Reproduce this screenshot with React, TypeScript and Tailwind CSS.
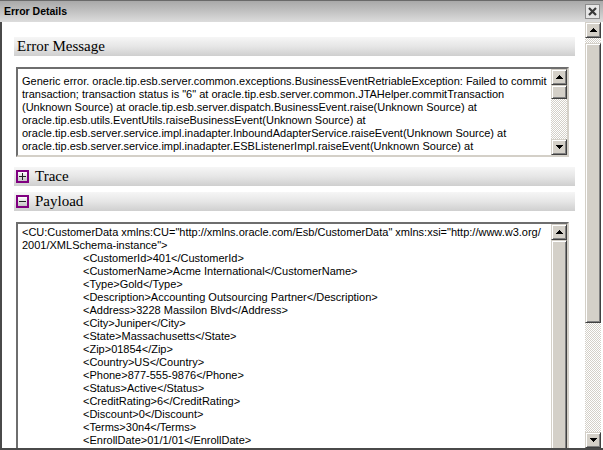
import React from "react";

const SANS = "font-['Liberation_Sans',Arial,sans-serif]";
const SERIF = "font-['Liberation_Serif','Times_New_Roman',serif]";

const errorLines = [
  "Generic error. oracle.tip.esb.server.common.exceptions.BusinessEventRetriableException: Failed to commit",
  'transaction; transaction status is "6" at oracle.tip.esb.server.common.JTAHelper.commitTransaction',
  "(Unknown Source) at oracle.tip.esb.server.dispatch.BusinessEvent.raise(Unknown Source) at",
  "oracle.tip.esb.utils.EventUtils.raiseBusinessEvent(Unknown Source) at",
  "oracle.tip.esb.server.service.impl.inadapter.InboundAdapterService.raiseEvent(Unknown Source) at",
  "oracle.tip.esb.server.service.impl.inadapter.ESBListenerImpl.raiseEvent(Unknown Source) at",
  "oracle.tip.esb.server.service.impl.inadapter.ESBListenerImpl.processMessage(Unknown Source) at",
];

const payloadFields = [
  "<CustomerId>401</CustomerId>",
  "<CustomerName>Acme International</CustomerName>",
  "<Type>Gold</Type>",
  "<Description>Accounting Outsourcing Partner</Description>",
  "<Address>3228 Massilon Blvd</Address>",
  "<City>Juniper</City>",
  "<State>Massachusetts</State>",
  "<Zip>01854</Zip>",
  "<Country>US</Country>",
  "<Phone>877-555-9876</Phone>",
  "<Status>Active</Status>",
  "<CreditRating>6</CreditRating>",
  "<Discount>0</Discount>",
  "<Terms>30n4</Terms>",
  "<EnrollDate>01/1/01</EnrollDate>",
];

function Arrow({ down }: { down?: boolean }) {
  return (
    <svg width="7" height="4" viewBox="0 0 7 4" shapeRendering="crispEdges">
      {down ? <path d="M0 0 H7 L3.5 4 Z" fill="#000" /> : <path d="M3.5 0 L7 4 H0 Z" fill="#000" />}
    </svg>
  );
}

const raised =
  "bg-[#d4d0c8] border border-[#d4d0c8] border-r-[#404040] border-b-[#404040] shadow-[inset_1px_1px_0_#ffffff,inset_-1px_-1px_0_#808080]";
const checker =
  "bg-[repeating-conic-gradient(#d4d0c8_0%_25%,#ffffff_0%_50%)] bg-size-[2px_2px]";

function ScrollButton({ down }: { down?: boolean }) {
  return (
    <div className={`w-[16px] h-[16px] shrink-0 flex items-center justify-center ${raised}`}>
      <Arrow down={down} />
    </div>
  );
}

function Scrollbar({ thumb, rest }: { thumb: string; rest: boolean }) {
  return (
    <div className={`w-[16px] shrink-0 flex flex-col ${checker}`}>
      <ScrollButton />
      <div className={`shrink-0 ${thumb} ${raised}`} />
      {rest && (
        <>
          <div className="flex-1" />
          <ScrollButton down />
        </>
      )}
    </div>
  );
}

function SectionHeader({ title, toggle }: { title: string; toggle?: "plus" | "minus" }) {
  return (
    <div className="ml-[12px] mr-[10px] h-[19px] shrink-0 flex items-center gap-[6px] bg-gradient-to-b from-[#f6f6f6] via-[#e6e6e6] to-[#cfcfcf]">
      {toggle && (
        <div className="ml-[2px] w-[13px] h-[13px] bg-[#800080] p-[2px]">
          <div className="w-full h-full bg-gradient-to-b from-[#ffffff] to-[#c4c4c4] flex items-center justify-center">
            <svg width="7" height="7" viewBox="0 0 7 7" shapeRendering="crispEdges">
              <rect x="0" y="3" width="7" height="1" fill="#222" />
              {toggle === "plus" && <rect x="3" y="0" width="1" height="7" fill="#222" />}
            </svg>
          </div>
        </div>
      )}
      <span className={`${SERIF} text-[15px] leading-none text-black ${toggle ? "" : "ml-[3px]"}`}>{title}</span>
    </div>
  );
}

function TextPanel({
  height,
  pt,
  children,
  scrollbar,
}: {
  height: string;
  pt: string;
  children: React.ReactNode;
  scrollbar: React.ReactNode;
}) {
  return (
    <div
      className={`ml-[14px] mr-[16px] ${height} shrink-0 flex border-2 border-t-[#6e6e6e] border-l-[#6e6e6e] border-r-[#d4d0c8] border-b-[#d4d0c8] bg-white`}
    >
      <div className={`flex-1 overflow-hidden pl-[4px] ${pt} ${SANS} text-[11px] leading-[13px] text-black`}>
        {children}
      </div>
      <div className="flex">{scrollbar}</div>
    </div>
  );
}

export default function App() {
  return (
    <div className={`w-[603px] h-[450px] flex flex-col overflow-hidden bg-white ${SANS}`}>
      {/* Title bar */}
      <div className="h-[22px] shrink-0 flex items-center justify-between pl-[4px] pr-[3px] border-t border-[#6a6a6a] bg-gradient-to-b from-[#a9a9a9] to-[#dcdcdc]">
        <span className="text-[10.5px] font-bold text-black">Error Details</span>
        <div className="w-[15px] h-[15px] flex items-center justify-center bg-[#e6e6e6] border border-[#8c8c8c]">
          <svg width="9" height="9" viewBox="0 0 9 9">
            <path d="M1 1 L8 8 M8 1 L1 8" stroke="#3a3a3a" strokeWidth="2.2" />
          </svg>
        </div>
      </div>

      {/* Body */}
      <div className="flex-1 min-h-0 flex border-l-2 border-b-2 border-[#4a4a4a]">
        <div className="flex-1 min-w-0 overflow-hidden flex flex-col pt-[15px]">
          <SectionHeader title="Error Message" />
          <div className="h-[11px] shrink-0" />
          <TextPanel height="h-[90px]" pt="pt-[6px]" scrollbar={<Scrollbar thumb="h-[14px]" rest />}>
            {errorLines.map((l) => (
              <div key={l} className="whitespace-nowrap">
                {l}
              </div>
            ))}
          </TextPanel>
          <div className="h-[10px] shrink-0" />
          <SectionHeader title="Trace" toggle="plus" />
          <div className="h-[6px] shrink-0" />
          <SectionHeader title="Payload" toggle="minus" />
          <div className="h-[11px] shrink-0" />
          <TextPanel height="h-[300px]" pt="pt-[2px]" scrollbar={<Scrollbar thumb="flex-1" rest={false} />}>
            <div className="whitespace-nowrap">
              {'<CU:CustomerData xmlns:CU="http://xmlns.oracle.com/Esb/CustomerData" xmlns:xsi="http://www.w3.org/'}
            </div>
            <div className="whitespace-nowrap">{'2001/XMLSchema-instance">'}</div>
            {payloadFields.map((f) => (
              <div key={f} className="whitespace-nowrap pl-[61px]">
                {f}
              </div>
            ))}
          </TextPanel>
        </div>

        {/* Outer scrollbar */}
        <div className="w-[18px] shrink-0 flex pr-[2px]">
          <div className={`w-[16px] flex flex-col ${checker}`}>
            <ScrollButton />
            <div className="h-[5px] shrink-0" />
            <div className={`h-[280px] shrink-0 ${raised}`} />
            <div className="flex-1" />
            <ScrollButton down />
          </div>
        </div>
      </div>
    </div>
  );
}
